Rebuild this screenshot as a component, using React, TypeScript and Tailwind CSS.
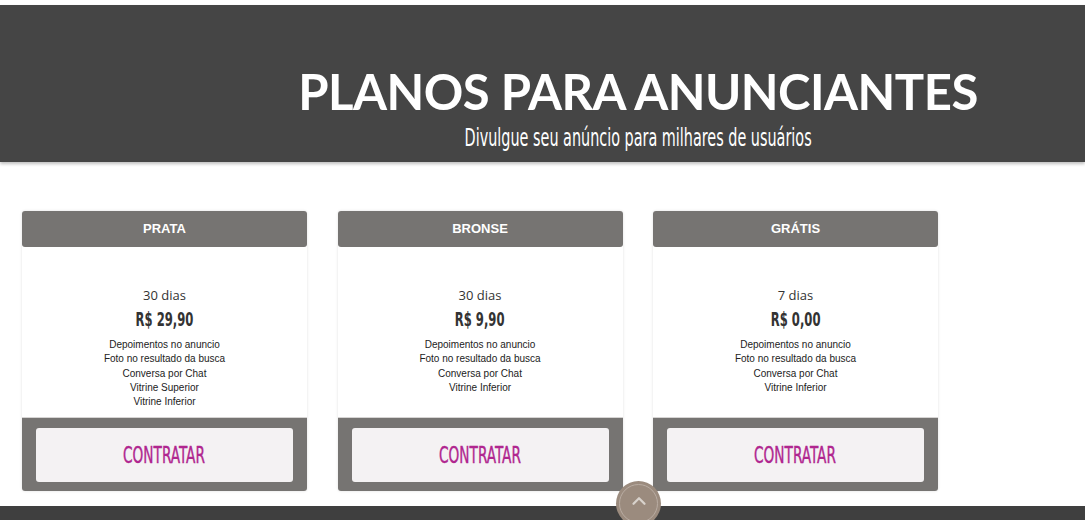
import { ChevronUp } from 'lucide-react';

interface Plan {
  name: string;
  days: string;
  price: string;
  features: string[];
}

const plans: Plan[] = [
  {
    name: 'PRATA',
    days: '30 dias',
    price: 'R$ 29,90',
    features: ['Depoimentos no anuncio', 'Foto no resultado da busca', 'Conversa por Chat', 'Vitrine Superior', 'Vitrine Inferior'],
  },
  {
    name: 'BRONSE',
    days: '30 dias',
    price: 'R$ 9,90',
    features: ['Depoimentos no anuncio', 'Foto no resultado da busca', 'Conversa por Chat', 'Vitrine Inferior'],
  },
  {
    name: 'GRÁTIS',
    days: '7 dias',
    price: 'R$ 0,00',
    features: ['Depoimentos no anuncio', 'Foto no resultado da busca', 'Conversa por Chat', 'Vitrine Inferior'],
  },
];

const narrow = "font-['DejaVu_Sans_Condensed','DejaVu_Sans',sans-serif]";

function PlanCard({ plan }: { plan: Plan }) {
  return (
    <div className="w-[285px] rounded-[3px] bg-white shadow-[0_0_3px_rgba(0,0,0,0.12)] overflow-hidden flex flex-col">
      <div className="h-[36px] bg-[#767472] rounded-b-[3px] flex items-center justify-center">
        <span className="text-white text-[13px] font-bold font-['Liberation_Sans',sans-serif]">{plan.name}</span>
      </div>
      <div className="h-[170px] flex flex-col items-center pt-[39px]">
        <div className="text-[13px] text-[#333] font-['Open_Sans',sans-serif] leading-[18px]">{plan.days}</div>
        <div className={`${narrow} text-[19px] font-bold text-[#333] leading-[26px] mt-[2px] scale-x-[0.68]`}>{plan.price}</div>
        <div className="mt-[6px] flex flex-col items-center text-[10px] leading-[14.3px] text-[#222] font-['Liberation_Sans',sans-serif]">
          {plan.features.map((f) => (
            <span key={f}>{f}</span>
          ))}
        </div>
      </div>
      <div className="bg-[#767472] px-[14px] pt-[10px] pb-[9px] border-t border-[#d6d4d3]">
        <button className={`w-full h-[54px] rounded-[3px] bg-[#f4f2f3] text-[#b0268f] ${narrow} text-[23px] flex items-center justify-center`}>
          <span className="scale-x-[0.66] inline-block [-webkit-text-stroke:0.4px_#b0268f]">CONTRATAR</span>
        </button>
      </div>
    </div>
  );
}

export default function App() {
  return (
    <div className="w-[1085px] h-[520px] bg-white overflow-hidden relative flex flex-col">
      <div className="mt-[5px] h-[157px] bg-[#454545] shadow-[0_2px_3px_rgba(0,0,0,0.25)] flex flex-col items-center pl-[191px]">
        <h1 className="mt-[58px] text-[49px] leading-[56px] font-bold text-white font-['Lato',sans-serif] tracking-[-0.5px]">
          PLANOS PARA ANUNCIANTES
        </h1>
        <p className={`${narrow} text-white text-[25px] leading-[30px] mt-[4px] scale-x-[0.64]`}>
          Divulgue seu anúncio para milhares de usuários
        </p>
      </div>
      <div className="flex gap-[30.5px] pl-[22px] mt-[49px]">
        {plans.map((p) => (
          <PlanCard key={p.name} plan={p} />
        ))}
      </div>
      <div className="mt-auto h-[14px] bg-[#3f3f3f]" />
      <div className="absolute left-[616px] top-[481px] w-[45px] h-[45px] rounded-full bg-[#9b8b7e] flex items-center justify-center">
        <div className="w-[39px] h-[39px] rounded-full border border-[#b9aca2] flex items-center justify-center">
          <ChevronUp className="w-[22px] h-[22px] text-[#d8d2cc] -mt-[5px]" strokeWidth={2.5} />
        </div>
      </div>
    </div>
  );
}
